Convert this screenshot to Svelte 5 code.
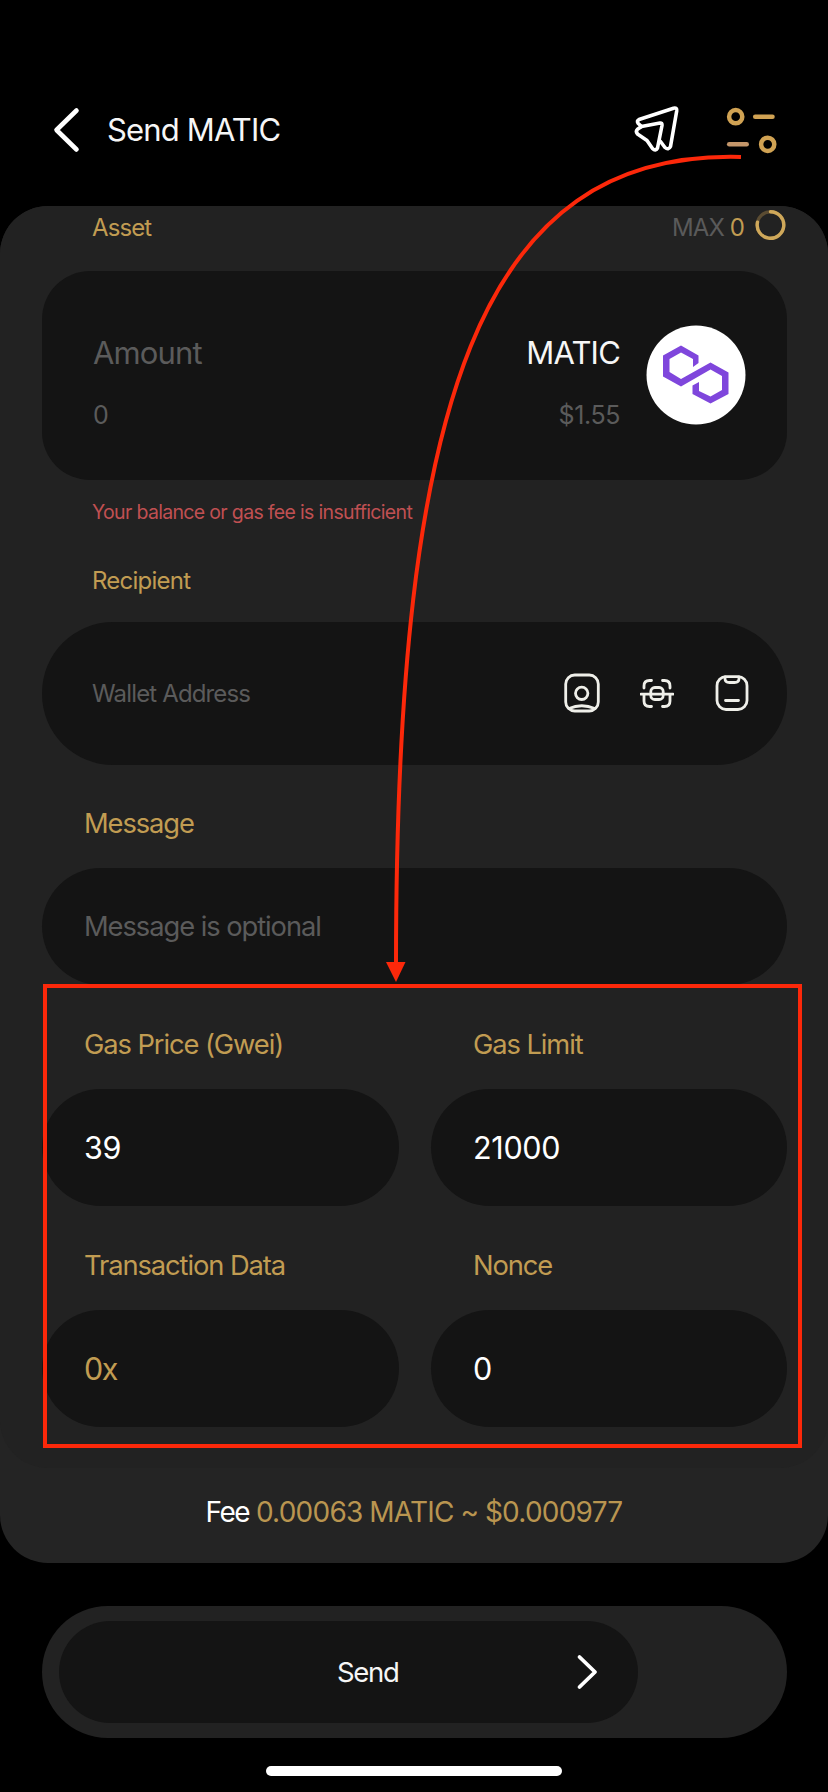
<script>
  const gasFields = [
    { label: 'Gas Price (Gwei)', value: '39' },
    { label: 'Gas Limit', value: '21000' },
    { label: 'Transaction Data', value: '0x', gold: true },
    { label: 'Nonce', value: '0' }
  ];
</script>

<div class="screen">
  <header>
    <svg class="back" width="30" height="48" viewBox="0 0 30 48"><path d="M24.500 4.500 4.500 24l20 19.500" /></svg>
    <h1>Send MATIC</h1>
    <svg class="plane" width="48" height="50" viewBox="0 0 48 50">
      <path d="M6.500 21.500 3 18.200Q1.700 15.800 4 14.500L38.500 3.200Q42.200 2.300 41.700 6L35.500 41.500Q33.500 45.500 30 42.500L25.500 36.500" />
      <path d="M6.500 21.500 25 18Q27.300 17.700 27 20.500L22.500 43Q20.500 46.500 17.500 43.500L12 35.500 2.500 29Q.300 26.500 2.500 24.300L6.500 21.500" />
    </svg>
    <svg class="tune" width="52" height="48" viewBox="0 0 52 48">
      <circle cx="9.700" cy="10.700" r="6.600" /><path d="M29.200 10.700h17.300" />
      <path d="M3.200 38.300h17.500" class="rose" /><circle cx="41.700" cy="38.300" r="6.600" />
    </svg>
  </header>

  <main>
    <section class="form">
      <div class="asset-row">
        <span class="asset">Asset</span>
        <span class="max">MAX <b>0</b></span>
        <svg width="32" height="32" viewBox="0 0 32 32">
          <circle cx="15.500" cy="16" r="13.300" class="track" />
          <path d="M15.500 2.700A13.300 13.300 0 1 1 2.500 13.200" class="arc" />
        </svg>
      </div>

      <div class="card">
        <div class="col">
          <span class="amount">Amount</span>
          <span class="small">0</span>
        </div>
        <div class="col right">
          <span class="token">MATIC</span>
          <span class="small price">$1.55</span>
        </div>
        <svg class="logo" width="100" height="100" viewBox="0 0 100 100">
          <circle cx="50" cy="50" r="49.500" fill="#fff" />
          <path fill="#7f46dc" d="M35 20.500 52.500 30.500V38L47 42V34L35 27.500 23.500 34V47L35 54 64.500 37.500 82.500 47.500V69L64.500 78.500 46.500 69V60.500L53 57V66L64.500 71.500 76 65V51L64.500 44.500 35 61.500 17 51.500V30.500Z" />
        </svg>
      </div>

      <p class="error">Your balance or gas fee is insufficient</p>
      <p class="recipient">Recipient</p>
      <div class="wallet">
        <span>Wallet Address</span>
        <svg width="36" height="40" viewBox="0 0 36 40">
          <rect x="1.700" y="2" width="32.600" height="36" rx="9" />
          <circle cx="17.700" cy="20.300" r="6.200" /><path d="M5 35.500Q17.700 30 30.800 35.500" />
        </svg>
        <svg class="scan" width="34" height="32" viewBox="0 0 34 32">
          <path d="M4 11V9q0-5.500 5.500-5.500H11.500M22.500 3.500h2q5.500 0 5.500 5.500v2M4 18v6q0 5.500 5.500 5.500H11.500M30 18v6q0 5.500-5.500 5.500h-2M1 17.200h32" />
          <rect x="10.800" y="10.500" width="12.400" height="12" rx="4" />
        </svg>
        <svg class="paste" width="34" height="36" viewBox="0 0 34 36">
          <rect x="2" y="1.700" width="30" height="32.800" rx="9" />
          <path d="M10 2v1.500q0 4 4.500 4h5q4.500 0 4.500-4V2M10.500 25.500h13" />
        </svg>
      </div>

      <p class="label message">Message</p>
      <div class="pill note">Message is optional</div>

      <div class="gas">
        {#each gasFields as f}
          <div>
            <p class="label">{f.label}</p>
            <div class="pill" class:gold={f.gold}>{f.value}</div>
          </div>
        {/each}
      </div>
    </section>
    <p class="fee"><span>Fee</span> 0.00063 MATIC ~ $0.000977</p>
  </main>

  <div class="slider">
    <div class="knob">
      <span>Send</span>
      <svg width="22" height="36" viewBox="0 0 22 36"><path d="M3.500 3 19 18 3.500 33" /></svg>
    </div>
  </div>
  <div class="home"></div>

  <svg class="callout" width="828" height="1792" viewBox="0 0 828 1792">
    <path d="M741 157C480 150 396 400 396 965" />
    <rect x="45" y="986" width="755" height="460" />
    <polygon points="386,962 405.500,962 396,982" />
  </svg>
</div>

<style>
  :global(body) { background: #000; }
  .screen {
    position: relative;
    width: 828px;
    height: 1792px;
    overflow: hidden;
    background: #000;
    color: #fff;
    font-family: Inter, "Liberation Sans", sans-serif;
    font-weight: 400;
    display: flex;
    flex-direction: column;
    box-sizing: border-box;
  }
  p, h1, b { margin: 0; font-weight: inherit; }
  svg { flex: none; fill: none; stroke-linecap: round; stroke-linejoin: round; }
  header {
    height: 206px;
    box-sizing: border-box;
    padding: 100px 50px 46px 52px;
    display: flex;
    align-items: center;
  }
  h1 { font-size: 31px; line-height: 60px; letter-spacing: -0.85px; margin-left: 25px; flex: 1; color: #f6f6f6; }
  .back { stroke: #fff; stroke-width: 4.600; }
  .plane { stroke: #fff; stroke-width: 3.600; margin-right: 43px; overflow: visible; }
  .tune { stroke: #d0a253; stroke-width: 4.500; }
  .rose { stroke: #c4966a; }
  main { height: 1357px; background: #242424; border-radius: 48px; }
  .form {
    height: 1262px;
    box-sizing: border-box;
    background: #222;
    border-radius: 48px;
    padding: 0 41px 0 42px;
  }
  .asset-row { height: 64.500px; padding: 4px 0 0 50px; box-sizing: border-box; display: flex; align-items: flex-start; font-size: 24px; line-height: 36px; }
  .asset { flex: 1; color: #c19c52; letter-spacing: -0.900px; }
  .max { color: #5a5a5a; letter-spacing: -0.900px; margin-right: 11px; }
  .max b { color: #c19c52; }
  .asset-row svg { margin-top: -1px; stroke-width: 3.400; }
  .track { stroke: #5b4c32; }
  .arc { stroke: #cfa85a; }
  .card { height: 209.500px; background: #141414; border-radius: 48px; padding: 54px 41px 0 51px; box-sizing: border-box; display: flex; }
  .col { flex: 1; display: flex; flex-direction: column; }
  .right { align-items: flex-end; }
  .amount { font-size: 31px; line-height: 56px; color: #5b5b5b; letter-spacing: -0.850px; }
  .token { font-size: 31px; line-height: 56px; letter-spacing: -0.800px; color: #f6f6f6; }
  .small { font-size: 25px; line-height: 36px; margin-top: 16px; color: #5b5b5b; }
  .price { letter-spacing: -0.400px; }
  .logo { margin-left: 26px; }
  .error { font-size: 19.500px; line-height: 30px; margin: 17px 0 0 50px; color: #c05052; letter-spacing: -0.670px; }
  .recipient { font-size: 24px; line-height: 36px; margin: 36px 0 0 50px; color: #c19c52; letter-spacing: -0.750px; }
  .wallet { height: 143px; margin-top: 22.500px; background: #141414; border-radius: 71px; display: flex; align-items: center; padding: 0 38px 0 50px; }
  .wallet span { flex: 1; font-size: 24px; color: #5b5b5b; letter-spacing: -0.850px; }
  .wallet svg { stroke: #efefe9; stroke-width: 2.800; }
  .wallet .scan { margin: 0 41px 0 40px; }
  .label { font-size: 27.300px; line-height: 40px; color: #c19c52; letter-spacing: -1.080px; padding-left: 42px; }
  .message { margin-top: 39.500px; }
  .pill { height: 116.500px; border-radius: 59px; background: #141414; padding-left: 42px; display: flex; align-items: center; font-size: 30.500px; letter-spacing: -0.300px; }
  .note { margin-top: 24px; font-size: 27.300px; color: #5b5b5b; letter-spacing: -1.050px; }
  .gold { color: #c19c52; letter-spacing: -1.500px; }
  .gas { display: grid; grid-template-columns: 357px 356px; column-gap: 32px; }
  .gas .label { margin-top: 40px; margin-bottom: 24.500px; }
  .fee { text-align: center; font-size: 28px; line-height: 42px; margin-top: 23px; color: #b99550; letter-spacing: -0.760px; word-spacing: -0.400px; }
  .fee span { color: #fff; letter-spacing: -1.500px; }
  .slider { margin: 42px 41px 0 42px; height: 132px; border-radius: 66px; background: #222; box-sizing: border-box; padding: 15px 17px; }
  main { display: flow-root; flex: none; }
  .slider { margin-top: 43px; }
  .knob { width: 579px; height: 102px; border-radius: 51px; background: #141414; display: flex; align-items: center; box-sizing: border-box; padding-left: 278px; }
  .knob span { font-size: 27.500px; letter-spacing: -1.300px; width: 239px; color: #f6f6f6; }
  .knob svg { stroke: #fff; stroke-width: 3.800; }
  .home { width: 296px; height: 10px; border-radius: 5px; background: #fff; margin: 28px auto 0; }
  .callout { position: absolute; inset: 0; pointer-events: none; stroke: #fc280a; stroke-width: 4; stroke-linecap: butt; stroke-linejoin: miter; }
  .callout polygon { fill: #fc280a; stroke: none; }
</style>
